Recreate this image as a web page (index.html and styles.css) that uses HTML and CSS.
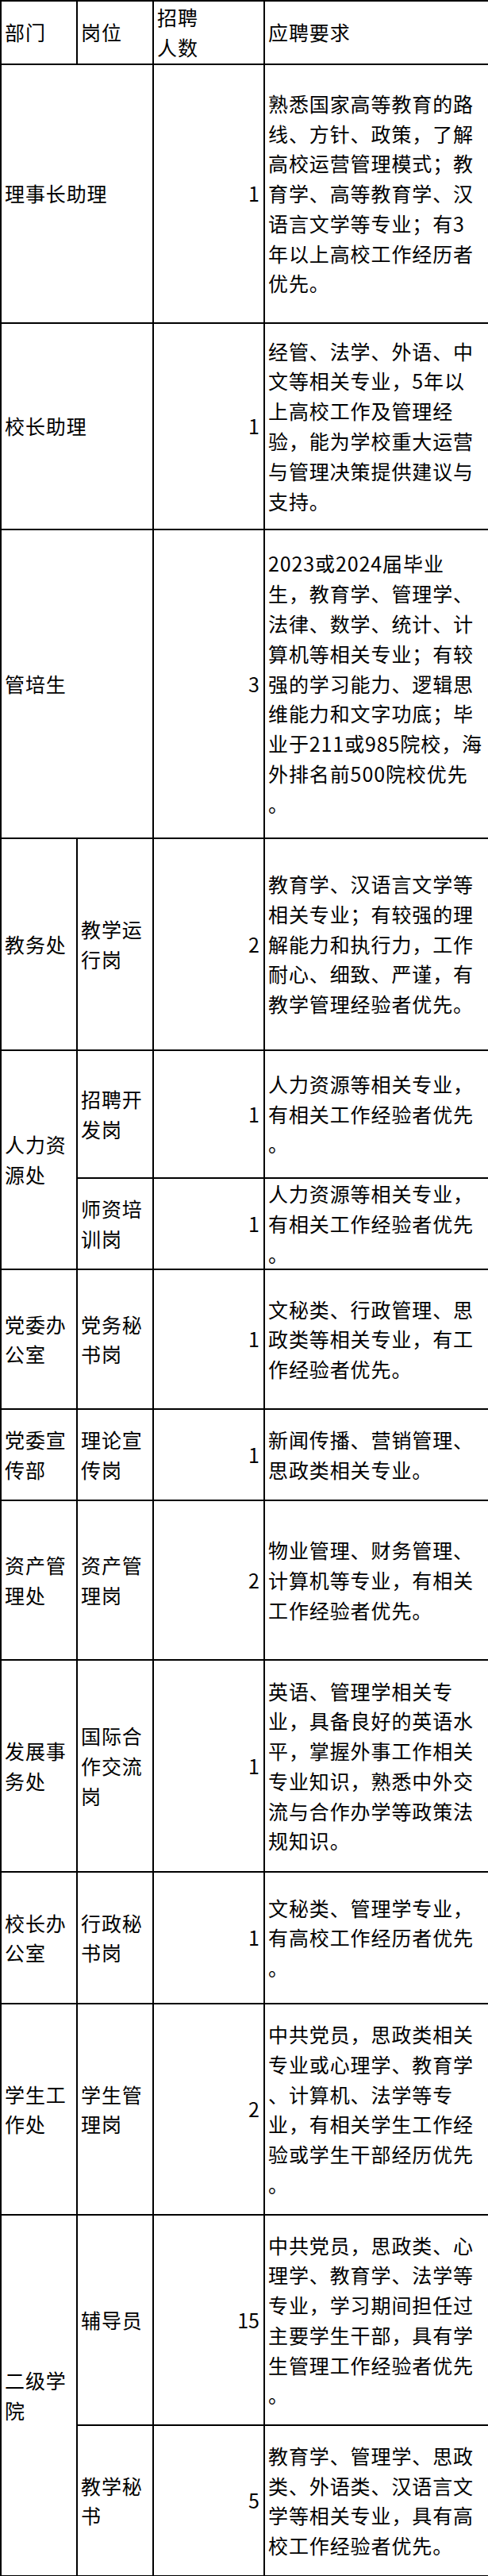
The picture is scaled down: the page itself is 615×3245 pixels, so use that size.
FILE: index.html
```html
<!DOCTYPE html>
<html lang="zh-CN">
<head>
<meta charset="utf-8">
<title>招聘岗位</title>
<link rel="stylesheet" href="styles.css">
</head>
<body>
<table class="sheet">
  <colgroup>
    <col class="c-dept">
    <col class="c-post">
    <col class="c-num">
    <col class="c-req">
  </colgroup>
  <tr class="r-head">
    <td>部门</td>
    <td>岗位</td>
    <td>招聘<br>人数</td>
    <td>应聘要求</td>
  </tr>
  <tr class="r1">
    <td colspan="2">理事长助理</td>
    <td class="num">1</td>
    <td>熟悉国家高等教育的路<br>线、方针、政策，了解<br>高校运营管理模式；教<br>育学、高等教育学、汉<br>语言文学等专业；有3<br>年以上高校工作经历者<br>优先。</td>
  </tr>
  <tr class="r2">
    <td colspan="2">校长助理</td>
    <td class="num">1</td>
    <td>经管、法学、外语、中<br>文等相关专业，5年以<br>上高校工作及管理经<br>验，能为学校重大运营<br>与管理决策提供建议与<br>支持。</td>
  </tr>
  <tr class="r3">
    <td colspan="2">管培生</td>
    <td class="num">3</td>
    <td>2023或2024届毕业<br>生，教育学、管理学、<br>法律、数学、统计、计<br>算机等相关专业；有较<br>强的学习能力、逻辑思<br>维能力和文字功底；毕<br>业于211或985院校，海<br>外排名前500院校优先<br>。</td>
  </tr>
  <tr class="r4">
    <td>教务处</td>
    <td>教学运<br>行岗</td>
    <td class="num">2</td>
    <td>教育学、汉语言文学等<br>相关专业；有较强的理<br>解能力和执行力，工作<br>耐心、细致、严谨，有<br>教学管理经验者优先。</td>
  </tr>
  <tr class="r5a">
    <td rowspan="2">人力资<br>源处</td>
    <td>招聘开<br>发岗</td>
    <td class="num">1</td>
    <td>人力资源等相关专业，<br>有相关工作经验者优先<br>。</td>
  </tr>
  <tr class="r5b">
    <td>师资培<br>训岗</td>
    <td class="num">1</td>
    <td>人力资源等相关专业，<br>有相关工作经验者优先<br>。</td>
  </tr>
  <tr class="r6">
    <td>党委办<br>公室</td>
    <td>党务秘<br>书岗</td>
    <td class="num">1</td>
    <td>文秘类、行政管理、思<br>政类等相关专业，有工<br>作经验者优先。</td>
  </tr>
  <tr class="r7">
    <td>党委宣<br>传部</td>
    <td>理论宣<br>传岗</td>
    <td class="num">1</td>
    <td>新闻传播、营销管理、<br>思政类相关专业。</td>
  </tr>
  <tr class="r8">
    <td>资产管<br>理处</td>
    <td>资产管<br>理岗</td>
    <td class="num">2</td>
    <td>物业管理、财务管理、<br>计算机等专业，有相关<br>工作经验者优先。</td>
  </tr>
  <tr class="r9">
    <td>发展事<br>务处</td>
    <td>国际合<br>作交流<br>岗</td>
    <td class="num">1</td>
    <td>英语、管理学相关专<br>业，具备良好的英语水<br>平，掌握外事工作相关<br>专业知识，熟悉中外交<br>流与合作办学等政策法<br>规知识。</td>
  </tr>
  <tr class="r10">
    <td>校长办<br>公室</td>
    <td>行政秘<br>书岗</td>
    <td class="num">1</td>
    <td>文秘类、管理学专业，<br>有高校工作经历者优先<br>。</td>
  </tr>
  <tr class="r11">
    <td>学生工<br>作处</td>
    <td>学生管<br>理岗</td>
    <td class="num">2</td>
    <td>中共党员，思政类相关<br>专业或心理学、教育学<br>、计算机、法学等专<br>业，有相关学生工作经<br>验或学生干部经历优先<br>。</td>
  </tr>
  <tr class="r12a">
    <td rowspan="2">二级学<br>院</td>
    <td>辅导员</td>
    <td class="num">15</td>
    <td>中共党员，思政类、心<br>理学、教育学、法学等<br>专业，学习期间担任过<br>主要学生干部，具有学<br>生管理工作经验者优先<br>。</td>
  </tr>
  <tr class="r12b">
    <td>教学秘<br>书</td>
    <td class="num">5</td>
    <td>教育学、管理学、思政<br>类、外语类、汉语言文<br>学等相关专业，具有高<br>校工作经验者优先。</td>
  </tr>
</table>
</body>
</html>
```

FILE: styles.css
```css
html, body {
  margin: 0;
  padding: 0;
  background: #ffffff;
}

.sheet {
  width: 615px;
  table-layout: fixed;
  border-collapse: collapse;
  font-family: "Noto Sans CJK SC", "Noto Sans", sans-serif;
  font-size: 25px;
  line-height: 37.8px;
  color: #000000;
}

.c-dept { width: 96px; }
.c-post { width: 96px; }
.c-num  { width: 140px; }
.c-req  { width: 283px; }

.sheet td {
  border: 2px solid #000000;
  padding: 0 3px 0 4px;
  vertical-align: middle;
  text-align: left;
  white-space: nowrap;
  letter-spacing: 0.9px;
  overflow: visible;
}

.sheet td.num {
  text-align: right;
  letter-spacing: 0;
  padding-right: 5px;
}

.r-head { height: 80px; }
.r1 { height: 326px; }
.r2 { height: 260px; }
.r3 { height: 389px; }
.r4 { height: 267px; }
.r5a { height: 161px; }
.r5b { height: 114px; }
.r6 { height: 176px; }
.r7 { height: 115px; }
.r8 { height: 201px; }
.r9 { height: 267px; }
.r10 { height: 166px; }
.r11 { height: 266px; }
.r12a { height: 265px; }
.r12b { height: 190px; }
```
